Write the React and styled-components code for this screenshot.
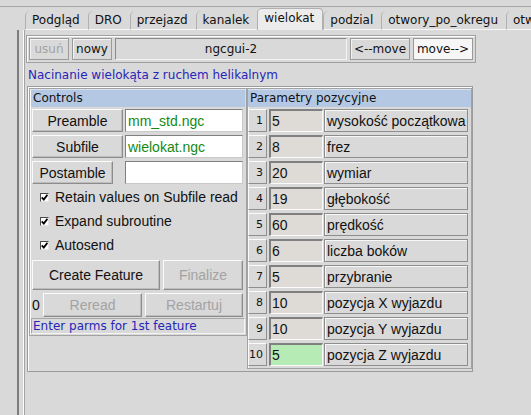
import React from 'react';
import styled, { createGlobalStyle } from 'styled-components';

const GlobalStyle = createGlobalStyle`
  * { box-sizing: border-box; }
  html, body { margin: 0; padding: 0; background: #d9d9d9; }
  body { font-family: "DejaVu Sans", sans-serif; font-size: 12px; color: #000; }
`;

const tkFont = `"Liberation Sans", Arial, sans-serif`;

const Window = styled.div`
  width: 531px;
  height: 415px;
  overflow: hidden;
  background: #d9d9d9;
  display: flex;
  flex-direction: column;
`;

const TopStrip = styled.div`
  flex: none;
  height: 7px;
  border-bottom: 1px solid #a6a6a6;
`;

const Body = styled.div`
  flex: 1;
  display: flex;
  min-height: 0;
`;

const Gutter = styled.div`
  flex: none;
  width: 23px;
  display: flex;
  padding: 23px 0 0 17px;
`;

const Rail = styled.div`
  width: 2px;
  background: #7d7d7d;
`;

const Notebook = styled.div`
  flex: 1;
  min-width: 0;
  display: flex;
  flex-direction: column;
`;

const TabBar = styled.div`
  flex: none;
  height: 23px;
  display: flex;
  align-items: flex-end;
  padding-left: 2px;
  overflow: hidden;
`;

const Tab = styled.div`
  flex: none;
  height: ${p => (p.$active ? 22 : 19)}px;
  padding: 0 8px ${p => (p.$active ? 4 : 0)}px 6px;
  line-height: 18px;
  white-space: nowrap;
  border-left: 1px solid #b0b0b0;
  border-top: ${p => (p.$active ? '1px solid #b0b0b0' : 'none')};
  border-right: ${p => (p.$active ? '1px solid #b0b0b0' : 'none')};
  border-bottom: ${p => (p.$active ? 'none' : '1px solid #f6f6f6')};
  border-top-left-radius: 5px;
  border-top-right-radius: ${p => (p.$active ? 4 : 0)}px;
  background: ${p => (p.$active ? '#ececec' : 'transparent')};
  color: #111;
`;

const Pane = styled.div`
  flex: 1;
  border-left: 1px solid #fbfbfb;
  box-shadow: inset 1px 0 0 #a3a3a3;
  padding: 5px 0 0 2px;
`;

const ActionBar = styled.div`
  width: 450px;
  height: 28px;
  display: flex;
  align-items: center;
  gap: 3px;
  padding: 0 2px;
  border: 1px solid #a0a0a0;
  box-shadow: inset 1px 1px 0 #fdfdfd;
`;

const ThemedButton = styled.div`
  flex: none;
  width: ${p => p.$w}px;
  height: 22px;
  line-height: 20px;
  text-align: center;
  border: 1px solid #9a9a9a;
  box-shadow: inset 1px 1px 0 #f4f4f4;
  background: ${p => (p.$hot ? '#f7f7f7' : '#d9d9d9')};
  color: ${p => (p.$disabled ? '#a3a3a3' : '#111')};
`;

const NameField = styled.div`
  flex: 1;
  height: 22px;
  line-height: 20px;
  text-align: center;
  border: 1px solid;
  border-color: #8a8a8a #f4f4f4 #f4f4f4 #8a8a8a;
  color: #111;
`;

const Title = styled.div`
  margin: 5px 0 3px 2px;
  line-height: 15px;
  color: #2626b8;
`;

const MainFrame = styled.div`
  margin-left: 1px;
  width: 446px;
  display: flex;
  align-items: flex-start;
  padding: 1px 0 2px 1px;
  border: 1px solid #9b9b9b;
  box-shadow: inset 1px 1px 0 #fdfdfd;
`;

const Group = styled.div`
  flex: none;
  width: ${p => p.$w}px;
  padding: 0 ${p => p.$pad}px ${p => p.$bottom}px;
  border: 1px solid #a2a2a2;
  box-shadow: inset 1px 1px 0 #fbfbfb;
`;

const SectionHeader = styled.div`
  height: 18px;
  line-height: 17px;
  padding-left: 2px;
  background: #b4c8e4;
  border-top: 1px solid #d6e2f1;
  color: #111;
`;

const FileGrid = styled.div`
  margin-top: 2px;
  padding-left: 1px;
  display: grid;
  grid-template-columns: 91px 118px;
  grid-auto-rows: 23px;
  column-gap: 2px;
  row-gap: 3px;
`;

const TkButton = styled.div`
  width: ${p => (p.$w ? `${p.$w}px` : 'auto')};
  height: ${p => p.$h || 23}px;
  display: flex;
  align-items: center;
  justify-content: center;
  font-family: ${tkFont};
  font-size: 14px;
  white-space: nowrap;
  border: 1px solid;
  border-color: #fbfbfb #8c8c8c #8c8c8c #fbfbfb;
  box-shadow: inset -1px -1px 0 #bdbdbd;
  color: ${p => (p.$disabled ? '#a3a3a3' : '#111')};
`;

const TkEntry = styled.div`
  height: 23px;
  display: flex;
  align-items: center;
  padding-left: 2px;
  font-family: ${tkFont};
  font-size: 14px;
  background: #fff;
  border: 1px solid;
  border-color: #808080 #c9c9c9 #c9c9c9 #808080;
  color: #148a14;
`;

const CheckList = styled.div`
  margin-top: 1px;
`;

const CheckRow = styled.div`
  height: 24px;
  display: flex;
  align-items: center;
  gap: 6px;
  padding-left: 9px;
  font-family: ${tkFont};
  font-size: 14px;
  color: #111;
`;

const Indicator = styled.span`
  flex: none;
  width: 9px;
  height: 9px;
  display: flex;
  align-items: center;
  justify-content: center;
  background: #fff;
  border: 1px solid;
  border-color: #4a4a4a #e6e6e6 #e6e6e6 #4a4a4a;
`;

const ButtonRow = styled.div`
  margin-top: 3px;
  padding-left: 1px;
  display: grid;
  grid-template-columns: ${p => p.$cols};
  column-gap: 3px;
  align-items: center;
`;

const Counter = styled.div`
  font-family: ${tkFont};
  font-size: 14px;
  color: #111;
`;

const Status = styled.div`
  margin-top: 1px;
  height: 16px;
  line-height: 14px;
  padding-left: 1px;
  border: 1px solid;
  border-color: #a8a8a8 #f4f4f4 #f4f4f4 #a8a8a8;
  color: #2626b8;
`;

const ParamList = styled.div`
  margin-top: 2px;
  display: flex;
  flex-direction: column;
  gap: 3px;
`;

const ParamRow = styled.div`
  height: 23px;
  display: grid;
  grid-template-columns: 20px 54px 146px;
`;

const Index = styled.div`
  height: 23px;
  margin-right: 1px;
  padding-right: 3px;
  text-align: right;
  font-size: 11px;
  line-height: 21px;
  border: 1px solid;
  border-color: #fbfbfb #8f8f8f #8f8f8f #fbfbfb;
  color: #111;
`;

const ParamValue = styled.div`
  width: 54px;
  margin-left: 1px;
  height: 23px;
  display: flex;
  align-items: center;
  padding-left: 1px;
  font-family: ${tkFont};
  font-size: 14px;
  background: ${p => (p.$focus ? '#b6ebb6' : '#dedbd6')};
  border-style: solid;
  border-width: 2px 1px 1px 2px;
  border-color: #808080 #fbfbfb #fbfbfb #808080;
  color: #111;
`;

const ParamLabel = styled.div`
  margin-left: 2px;
  height: 23px;
  display: flex;
  align-items: center;
  padding-left: 2px;
  font-family: ${tkFont};
  font-size: 14px;
  white-space: nowrap;
  overflow: hidden;
  border: 1px solid #8e8e8e;
  box-shadow: inset 1px 1px 0 #f7f7f7;
  color: #111;
`;

const tabs = ['Podgląd', 'DRO', 'przejazd', 'kanalek', 'wielokat', 'podzial', 'otwory_po_okregu', 'otw'];

const params = [
  ['5', 'wysokość początkowa'],
  ['8', 'frez'],
  ['20', 'wymiar'],
  ['19', 'głębokość'],
  ['60', 'prędkość'],
  ['6', 'liczba boków'],
  ['5', 'przybranie'],
  ['10', 'pozycja X wyjazdu'],
  ['10', 'pozycja Y wyjazdu'],
  ['5', 'pozycja Z wyjazdu'],
];

const checks = ['Retain values on Subfile read', 'Expand subroutine', 'Autosend'];

function Check() {
  return (
    <Indicator>
      <svg width="7" height="7" viewBox="0 0 7 7">
        <path d="M0.8 3.4 L2.8 5.6 L6.4 0.8" fill="none" stroke="#000" strokeWidth="1.8" />
      </svg>
    </Indicator>
  );
}

export default function App() {
  return (
    <>
      <GlobalStyle />
      <Window>
        <TopStrip />
        <Body>
          <Gutter>
            <Rail />
          </Gutter>
          <Notebook>
            <TabBar>
              {tabs.map(t => (
                <Tab key={t} $active={t === 'wielokat'}>{t}</Tab>
              ))}
            </TabBar>
            <Pane>
              <ActionBar>
                <ThemedButton $w={40} $disabled>usuń</ThemedButton>
                <ThemedButton $w={40}>nowy</ThemedButton>
                <NameField>ngcgui-2</NameField>
                <ThemedButton $w={60}>&lt;--move</ThemedButton>
                <ThemedButton $w={60} $hot>move--&gt;</ThemedButton>
              </ActionBar>
              <Title>Nacinanie wielokąta z ruchem helikalnym</Title>
              <MainFrame>
                <Group $w={218} $pad={1} $bottom={1}>
                  <SectionHeader>Controls</SectionHeader>
                  <FileGrid>
                    <TkButton>Preamble</TkButton>
                    <TkEntry>mm_std.ngc</TkEntry>
                    <TkButton>Subfile</TkButton>
                    <TkEntry>wielokat.ngc</TkEntry>
                    <TkButton $w={81}>Postamble</TkButton>
                    <TkEntry />
                  </FileGrid>
                  <CheckList>
                    {checks.map(c => (
                      <CheckRow key={c}>
                        <Check />
                        {c}
                      </CheckRow>
                    ))}
                  </CheckList>
                  <ButtonRow $cols="128px 80px">
                    <TkButton $h={30}>Create Feature</TkButton>
                    <TkButton $h={30} $disabled>Finalize</TkButton>
                  </ButtonRow>
                  <ButtonRow $cols="8px 99px 98px">
                    <Counter>0</Counter>
                    <TkButton $h={24} $disabled>Reread</TkButton>
                    <TkButton $h={24} $disabled>Restartuj</TkButton>
                  </ButtonRow>
                  <Status>Enter parms for 1st feature</Status>
                </Group>
                <Group $w={225} $pad={0} $bottom={2}>
                  <SectionHeader>Parametry pozycyjne</SectionHeader>
                  <ParamList>
                    {params.map(([v, label], i) => (
                      <ParamRow key={label}>
                        <Index>{i + 1}</Index>
                        <ParamValue $focus={i === params.length - 1}>{v}</ParamValue>
                        <ParamLabel>{label}</ParamLabel>
                      </ParamRow>
                    ))}
                  </ParamList>
                </Group>
              </MainFrame>
            </Pane>
          </Notebook>
        </Body>
      </Window>
    </>
  );
}
